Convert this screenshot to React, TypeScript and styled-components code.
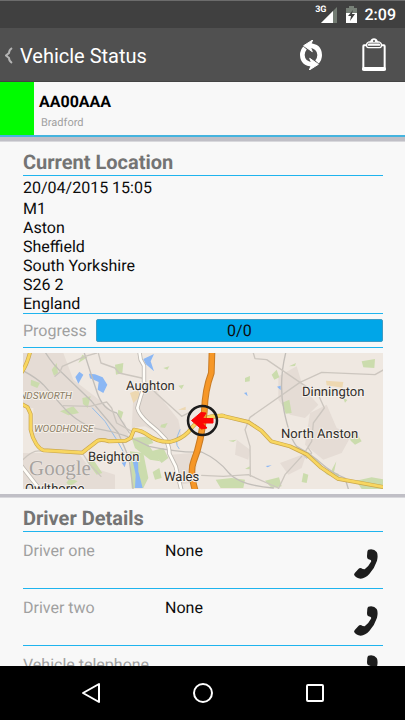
import React from "react";
import styled, { createGlobalStyle } from "styled-components";

const blue = "#1fb4ee";

const GlobalStyle = createGlobalStyle`
  * { box-sizing: border-box; }
  body { margin: 0; background: #f8f8f8; }
  button { border: 0; padding: 0; background: none; color: inherit; font: inherit; cursor: pointer; }
`;

const Screen = styled.div`
  display: flex;
  flex-direction: column;
  height: 100vh;
  background: #f8f8f8;
  color: #0c0c0c;
  font-family: Roboto, "Liberation Sans", sans-serif;
  font-size: 16px;
  line-height: 19px;
  text-rendering: geometricPrecision;
`;

const StatusBar = styled.div`
  display: flex;
  flex: none;
  align-items: center;
  justify-content: flex-end;
  height: 28px;
  padding: 0 9px 0 0;
  border-top: 1px solid #6c6c6c;
  background: #404040;
  color: #fff;
`;

const NetworkLabel = styled.span`
  align-self: flex-start;
  font-size: 9px;
  font-weight: 700;
  line-height: 18px;
`;

const SignalIcon = styled.svg`
  width: 16px;
  height: 16px;
  margin: 0 9px 0 -6px;
`;

const BatteryIcon = styled.svg`
  width: 11px;
  height: 17px;
  margin-right: 8px;
`;

const Clock = styled.time`
  font-weight: 500;
`;

const AppBar = styled.header`
  display: flex;
  flex: none;
  align-items: center;
  height: 54px;
  padding: 1px 8px 0 5px;
  border-bottom: 1px solid #444;
  background: #505050;
  color: #fff;
`;

const BackButton = styled.button`
  display: flex;
  align-items: center;
  gap: 7px;
`;

const Title = styled.h1`
  margin: 0;
  padding-top: 2px;
  font-size: 20px;
  font-weight: 400;
  line-height: 24px;
`;

const Actions = styled.div`
  display: flex;
  gap: 16px;
  margin-left: auto;
`;

const ActionButton = styled.button`
  display: grid;
  place-items: center;
  width: 47px;
  height: 48px;
`;

const Content = styled.main`
  flex: 1;
  min-height: 0;
  overflow-y: auto;
  scrollbar-width: none;
`;

const Vehicle = styled.section`
  display: flex;
  height: 55px;
  border-bottom: 2px solid #45b4df;
`;

const StatusBlock = styled.div`
  flex: none;
  width: 34px;
  background: #00fc00;
`;

const VehicleText = styled.div`
  padding: 10px 5px 0;
`;

const Registration = styled.h2`
  margin: 0;
  color: #000;
  font-size: 16px;
  font-weight: 700;
  line-height: 19px;
`;

const Depot = styled.p`
  margin: 5px 0 0 2px;
  color: #a0a0a0;
  font-size: 11px;
  line-height: 13px;
`;

const Divider = styled.div<{ $thick?: boolean }>`
  height: ${(p) => (p.$thick ? 5 : 4)}px;
  background: #c0bfc6;
  border-bottom: 1px solid #d8d8dc;
`;

const Section = styled.section`
  padding: 8px 22px 5px 23px;
`;

const SectionTitle = styled.h2`
  margin: 0;
  height: 26px;
  border-bottom: 1px solid ${blue};
  color: #747474;
  font-size: 20px;
  font-weight: 700;
  line-height: 25px;
`;

const Address = styled.address`
  padding-top: 2px;
  border-bottom: 1px solid ${blue};
  font-style: normal;
`;

const AddressLine = styled.div``;

const Timestamp = styled.time`
  display: block;
  margin-bottom: 2px;
`;

const ProgressRow = styled.div`
  display: flex;
  align-items: center;
  height: 34px;
  border-bottom: 1px solid ${blue};
`;

const Label = styled.span`
  color: #a0a0a0;
`;

const ProgressBar = styled.div`
  flex: 1;
  height: 23px;
  margin-left: 9px;
  border: 1px solid #3e9bc4;
  border-radius: 2px;
  background: #00a6e8;
  line-height: 21px;
  text-align: center;
`;

const MapView = styled.svg`
  display: block;
  width: 100%;
  height: 136px;
  margin-top: 5px;
  background: #efe8e1;
  font-family: Roboto, "Liberation Sans", sans-serif;
`;

const DriverRow = styled.div`
  display: grid;
  grid-template-columns: 142px 1fr 34px;
  height: 57px;
  padding-top: 9px;
  border-bottom: 1px solid ${blue};
`;

const CallButton = styled.button<{ $compact?: boolean }>`
  display: grid;
  place-items: center;
  width: 34px;
  height: ${(p) => (p.$compact ? 30 : 46)}px;
  color: #1d1d1d;
`;

const NavBar = styled.nav`
  display: flex;
  flex: none;
  align-items: center;
  justify-content: center;
  gap: 64px;
  height: 54px;
  background: #000;
`;

const NavButton = styled.button`
  display: grid;
  place-items: center;
  width: 48px;
  height: 48px;
`;

const places = [
  { name: "Aughton", x: 103, y: 37 },
  { name: "Beighton", x: 65, y: 108 },
  { name: "Wales", x: 141, y: 128 },
  { name: "Dinnington", x: 279, y: 43 },
  { name: "North Anston", x: 258, y: 85 },
  { name: "Owlthorpe", x: 2, y: 140 },
];

const yellowWest = "M24 180 L38 188 L47 208 L47 255 Q52 280 64 298 Q74 313 86 317 L202 324 L248 288 Q260 283 282 290 L332 288 L347 280 L357 255 Q380 257 400 272 Q430 294 468 291 Q498 284 520 262 Q540 235 560 223 Q590 212 625 213";
const yellowEast = "M30 217 L65 213 L145 232 L184 258 L214 290 L270 305 L320 329 L364 369 L413 402 L550 427";
const motorway = "M591 20 L589 85 Q570 135 568 200 Q560 290 536 350 Q524 380 540 435";
const whiteRoad = "M373 20 L377 45 L387 63 L387 125 Q376 158 367 190 Q372 210 400 235 Q430 258 453 285 Q464 310 463 327 L482 365 L500 440";

function LocationMap() {
  return (
    <MapView viewBox="0 0 360 136" preserveAspectRatio="xMidYMid slice" role="img" aria-label="Map of vehicle location">
      <g transform="scale(.333333) translate(-24 -25)" fill="none" strokeLinecap="round" strokeLinejoin="round">
        <g fill="#e5dcd5">
          <path d="M20 25H145L175 105 265 175 330 235 345 290 245 280 200 320H90L55 275V190H24Z" />
          <path d="M355 155 415 125 450 175 490 225 500 275 465 285 390 245 350 250Z" />
          <path d="M24 325H190L220 365 300 390V433H24Z" />
          <path d="M470 330 530 325 545 365 530 415 490 420Z" />
          <path d="M790 95 845 65 865 130 910 180 870 220 825 210 790 165Z" />
          <path d="M885 205 935 180 965 250 1010 270 980 325 925 345 870 300Z" />
          <path d="M795 355 875 325 860 370 820 390Z" />
          <path d="M665 285 705 315 700 345 660 330Z" />
        </g>
        <g fill="#cbdcad">
          <path d="M48 105 75 115 67 130 47 122ZM110 75 125 55 129 85 117 93ZM135 200 175 185 192 205 160 212ZM202 160 227 155 218 190 204 178Z" />
          <path d="M300 60 325 55 322 85 303 90ZM310 195 325 202 318 225 308 210ZM350 280 400 300 435 350 405 345 360 310Z" />
          <path d="M345 320 385 325 400 400 385 430 350 430ZM408 320 445 310 460 340 440 355ZM413 382 433 370 440 400 420 405Z" />
          <path d="M215 350 225 330 262 385 245 390ZM165 400 188 410 165 425 154 414ZM438 240 458 235 450 250 436 248Z" />
          <path d="M602 405 650 400 690 405 685 430 617 430ZM750 408 792 398 800 425 770 430ZM865 385 880 390 875 415 860 412Z" />
          <path d="M770 90 785 75 793 98 778 105ZM690 100 705 94 704 110 690 112ZM800 175 823 165 830 205 812 207ZM822 65 843 55 840 64Z" />
          <path d="M1040 50 1080 43 1078 70 1045 68ZM1000 260 1025 265 1040 290 1020 300 1007 288ZM640 288 665 285 655 292ZM950 376 964 350 956 387Z" />
          <path d="M840 305 885 325 930 375 970 387 975 403 936 390 895 350ZM1023 408 1070 398 1110 405V433H1040ZM985 160 997 166 990 174ZM690 373 704 365 707 374Z" />
          <path d="M190 55 217 38 202 30ZM445 70 463 65 457 75ZM490 123 507 120 500 134ZM350 280 405 275 415 295 390 303Z" />
        </g>
        <g fill="#edd8b1">
          <path d="M345 145 370 135 375 155 355 175ZM933 108 985 112 982 129 935 122ZM490 195 512 186 512 196Z" />
        </g>
        <g fill="#8bb7f4">
          <path d="M222 87 240 89 263 98 277 120 265 145 248 135 251 112 225 101ZM181 97 193 81 205 90 190 117ZM385 43 417 28 407 50 417 80 392 58Z" />
          <path d="M353 348 369 342 370 380 383 430 360 430 362 390ZM320 354 334 351 329 368ZM687 145 695 143 698 155ZM786 126 797 123 797 136ZM752 364 770 362 758 368Z" />
        </g>
        <path d="M232 190 270 230 305 285 327 325M495 255Q475 295 492 312" stroke="#94bce9" strokeWidth="3" />
        <g stroke="#c2beb9" strokeWidth="4">
          <path d="M92 25Q115 62 145 88L230 170 310 265 342 340 354 432M208 25Q230 95 247 145T305 205L343 265M24 78Q65 100 85 120L140 182Q195 245 260 255T402 305Q495 325 560 322Q610 345 640 383T775 430" />
          <path d="M812 25Q790 115 807 198T845 305Q890 330 920 357T990 400L1000 433" />
        </g>
        <g stroke="#ccc6bf" strokeWidth="4">
          <path d="M120 95 135 82 142 65 210 35 245 25M250 25 258 55 300 70 312 85 380 100 425 147 500 215 530 200M145 183 225 185 275 172 290 190 305 235 350 260" />
          <path d="M24 345Q55 312 82 320M202 325 225 360 258 395M715 25 720 42 755 45 855 113 920 83 1080 90 1110 73M855 113 705 218 690 255 705 305 706 395" />
          <path d="M855 113 910 150 928 190 895 235 890 290 865 330 875 340 890 325 880 310M860 335 810 390 790 433M560 392 625 395 700 390 790 430" />
        </g>
        <g stroke="#bdb8b2" strokeWidth="13"><path d={whiteRoad} /><path d="M20 365 75 435" /></g>
        <g stroke="#fffdf8" strokeWidth="8"><path d={whiteRoad} /><path d="M20 365 75 435" /></g>
        <g stroke="#c9a54b" strokeWidth="12"><path d={yellowWest} /><path d="M46 20Q36 60 20 83" /><path d={yellowEast} transform="translate(555 0)" /></g>
        <g stroke="#f8d660" strokeWidth="8"><path d={yellowWest} /><path d="M46 20Q36 60 20 83" /><path d={yellowEast} transform="translate(555 0)" /></g>
        <path d={motorway} stroke="#c87b24" strokeWidth="20" />
        <path d={motorway} stroke="#f69727" strokeWidth="14" />
      </g>
      <g fill="#302d29" stroke="#f6f1ec" strokeWidth="2" paintOrder="stroke" fontSize="13">
        {places.map((p) => <text key={p.name} x={p.x} y={p.y}>{p.name}</text>)}
      </g>
      <g fill="#8a7c64" stroke="#f5f0e9" strokeWidth="2" paintOrder="stroke" fontSize="10" fontStyle="italic">
        <text x="49" y="46" textAnchor="end">HANDSWORTH</text>
        <text x="11" y="79">WOODHOUSE</text>
      </g>
      <text x="6" y="122" fill="#a7a39f" stroke="#eee9e5" strokeWidth="1" paintOrder="stroke" fontSize="21" fontFamily='"Liberation Serif", serif'>Google</text>
      <circle cx="179.500" cy="67.500" r="14.500" fill="none" stroke="#1c1c1c" strokeWidth="2.500" />
      <path d="M168.500 67.500 178 59.500 183 60 179.500 65.500H190V70H179.500L184 75 178.500 76Z" fill="#fb0505" stroke="#fb0505" strokeLinejoin="round" />
    </MapView>
  );
}

function PhoneIcon() {
  return (
    <svg width="24" height="30" viewBox="0 0 72 90" fill="currentColor" aria-hidden="true">
      <path d="M43 2Q60-2 68 9Q73 18 69 35Q62 57 46 75Q34 88 20 89Q6 88 1 79Q-1 75 3 71L14 59Q19 55 26 60L32 61Q43 54 50 40Q53 35 50 33L42 30Q39 28 39 22L40 8Q41 3 43 2Z" />
    </svg>
  );
}

function SyncIcon() {
  return (
    <svg width="24" height="30" viewBox="0 0 72 90" aria-hidden="true">
      <g id="arrow">
        <path d="M31 17Q61 18 62 45Q62 57 54 66" fill="none" stroke="#fff" strokeWidth="14" />
        <path d="M41 0 14 17 40 35 35 24 36 12Z" fill="#fff" stroke="#fff" strokeWidth="3" />
      </g>
      <use href="#arrow" transform="rotate(180 36 45)" />
    </svg>
  );
}

function ClipboardIcon() {
  return (
    <svg width="24" height="34" viewBox="0 0 72 102" fill="none" stroke="#fff" aria-hidden="true">
      <path d="M12 22H6Q4 22 4 25V94H68V25Q68 22 66 22H60" strokeWidth="6" />
      <path d="M6 93H66" strokeWidth="12" strokeLinecap="round" />
      <path d="M14 25V18Q16 12 26 11Q29 3 36 3T46 11Q56 12 58 18V25Q57 29 52 29H20Q15 29 14 25Z" strokeWidth="4" />
      <path d="M26 11Q29 3 36 3T46 11L54 14H18Z" fill="#fff" stroke="none" />
      <path d="M21 20H51" strokeWidth="7" strokeLinecap="round" />
      <circle cx="36" cy="9" r="3" fill="#505050" stroke="none" />
    </svg>
  );
}

const addressLines = ["M1", "Aston", "Sheffield", "South Yorkshire", "S26 2", "England"];
const contacts = [
  { label: "Driver one", value: "None" },
  { label: "Driver two", value: "None" },
  { label: "Vehicle telephone", value: "", compact: true },
];

export default function App() {
  return (
    <Screen>
      <GlobalStyle />
      <StatusBar>
        <NetworkLabel>3G</NetworkLabel>
        <SignalIcon viewBox="0 0 16 16" aria-hidden="true">
          <path d="M16 0V16H0Z" fill="#737c73" /><path d="M12 4V16H0Z" fill="#fff" />
        </SignalIcon>
        <BatteryIcon viewBox="0 0 11 17" aria-hidden="true">
          <path d="M3 0H8V2H11V7H0V2H3Z" fill="#778077" /><path d="M0 7H11V17H0Z" fill="#fff" />
          <path d="M7 4 2 10H5L4 15 9 8H6Z" fill="#404040" />
        </BatteryIcon>
        <Clock>2:09</Clock>
      </StatusBar>
      <AppBar>
        <BackButton aria-label="Back, Vehicle Status">
          <svg width="8" height="17" viewBox="0 0 8 17" fill="none" stroke="#b4b4b4" strokeWidth="2" aria-hidden="true">
            <path d="M7 1Q4 3 4 6L1 8.500 4 11Q4 14 7 16" />
          </svg>
          <Title>Vehicle Status</Title>
        </BackButton>
        <Actions>
          <ActionButton aria-label="Refresh"><SyncIcon /></ActionButton>
          <ActionButton aria-label="Clipboard"><ClipboardIcon /></ActionButton>
        </Actions>
      </AppBar>
      <Content>
        <Vehicle>
          <StatusBlock />
          <VehicleText>
            <Registration>AA00AAA</Registration>
            <Depot>Bradford</Depot>
          </VehicleText>
        </Vehicle>
        <Divider $thick />
        <Section>
          <SectionTitle>Current Location</SectionTitle>
          <Address>
            <Timestamp>20/04/2015 15:05</Timestamp>
            {addressLines.map((line) => <AddressLine key={line}>{line}</AddressLine>)}
          </Address>
          <ProgressRow>
            <Label id="progress-label">Progress</Label>
            <ProgressBar role="progressbar" aria-labelledby="progress-label" aria-valuetext="0/0">0/0</ProgressBar>
          </ProgressRow>
          <LocationMap />
        </Section>
        <Divider />
        <Section>
          <SectionTitle>Driver Details</SectionTitle>
          {contacts.map((c) => (
            <DriverRow key={c.label}>
              <Label>{c.label}</Label>
              <span>{c.value}</span>
              <CallButton $compact={c.compact} aria-label={`Call ${c.label}`}><PhoneIcon /></CallButton>
            </DriverRow>
          ))}
        </Section>
      </Content>
      <NavBar aria-label="System navigation">
        <NavButton aria-label="Back">
          <svg width="20" height="22" viewBox="0 0 20 22" fill="none" stroke="#fff" strokeWidth="2" strokeLinejoin="round"><path d="M18 2V20L2 11Z" /></svg>
        </NavButton>
        <NavButton aria-label="Home">
          <svg width="20" height="20" viewBox="0 0 20 20" fill="none" stroke="#fff" strokeWidth="2"><circle cx="10" cy="10" r="9" /></svg>
        </NavButton>
        <NavButton aria-label="Recent apps">
          <svg width="18" height="18" viewBox="0 0 18 18" fill="none" stroke="#fff" strokeWidth="2"><rect x="1" y="1" width="16" height="16" rx="1" /></svg>
        </NavButton>
      </NavBar>
    </Screen>
  );
}
